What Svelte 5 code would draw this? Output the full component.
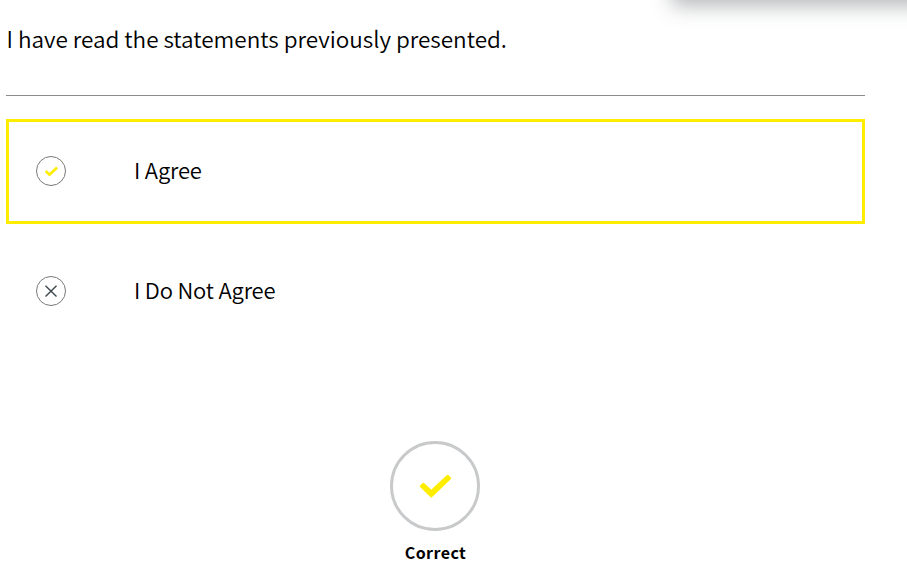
<script>
  const options = [
    { label: 'I Agree', kind: 'check', selected: true },
    { label: 'I Do Not Agree', kind: 'cross', selected: false },
  ];
</script>

<main class="page">
  <div class="floating"></div>
  <h1><span class="question">I have read the statements previously presented.</span></h1>
  <div class="options">
    {#each options as option}
      <div class="option" class:selected={option.selected}>
        <svg class="mark" viewBox="0 0 30 30">
          <circle cx="15" cy="15" r="14.5" fill="none" stroke="#77787b" stroke-width="1" />
          {#if option.kind === 'check'}
            <path d="M9.7 15.1l3.8 3.6 7.6-7.2" fill="none" stroke="#ffed00" stroke-width="2.7" />
          {:else}
            <path d="M9.5 9.8l11 10.8M20.5 9.8l-11 10.8" fill="none" stroke="#3c474d" stroke-width="1.4" />
          {/if}
        </svg>
        <span class="label">{option.label}</span>
      </div>
    {/each}
  </div>
  <div class="feedback">
    <svg class="badge" viewBox="0 0 90 90">
      <circle cx="45" cy="45" r="43.5" fill="none" stroke="#c8c9ca" stroke-width="3" />
      <path d="M30.8 45.2L33.3 42.8L41.3 50L57.7 34.8L60.2 37.3L41.3 55.6Z" fill="#ffed00" stroke="#ffed00" stroke-width="2" stroke-linejoin="round" />
    </svg>
    <span class="result">Correct</span>
  </div>
</main>

<style>
  :global(body) {
    background: #fff;
    overflow: hidden;
  }
  .page {
    position: relative;
    box-sizing: border-box;
    height: 583px;
    padding: 0 42px 0 6px;
    overflow: hidden;
    color: #000;
    font-family: "Noto Sans CJK SC", "Noto Sans", sans-serif;
    font-weight: 350;
  }
  .floating {
    position: absolute;
    top: -80px;
    left: 672px;
    width: 300px;
    height: 80px;
    box-shadow: 0 5px 20px rgba(60, 66, 70, 0.4);
  }
  h1 {
    box-sizing: border-box;
    height: 96px;
    margin: 0;
    padding-top: 21px;
    border-bottom: 1px solid #8b8b8d;
    font-size: 22.5px;
    font-weight: 350;
    letter-spacing: -0.02px;
    line-height: 34px;
    white-space: nowrap;
  }
  .question {
    padding-left: 0.5px;
  }
  .options {
    display: flex;
    flex-direction: column;
    gap: 15px;
    padding-top: 23px;
  }
  .option {
    box-sizing: border-box;
    display: flex;
    align-items: center;
    gap: 67px;
    height: 105px;
    padding: 0 0 2px 27px;
    border: 3px solid transparent;
    font-size: 22px;
    letter-spacing: -0.18px;
    line-height: 34px;
  }
  .selected {
    border-color: #ffed00;
  }
  .mark {
    width: 30px;
    height: 30px;
  }
  .label {
    padding: 0 0 3px 1px;
  }
  .feedback {
    display: flex;
    flex-direction: column;
    align-items: center;
    padding: 97px 1px 0 0;
  }
  .badge {
    width: 90px;
    height: 90px;
  }
  .result {
    margin-top: 8px;
    padding-left: 1px;
    font-size: 16px;
    font-weight: 700;
    letter-spacing: 0.4px;
    line-height: 26px;
  }
</style>
